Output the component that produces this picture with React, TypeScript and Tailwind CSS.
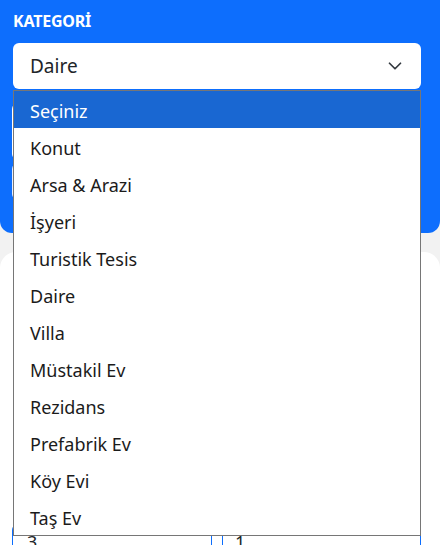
import { ChevronDown } from 'lucide-react';

const options = [
  'Seçiniz',
  'Konut',
  'Arsa & Arazi',
  'İşyeri',
  'Turistik Tesis',
  'Daire',
  'Villa',
  'Müstakil Ev',
  'Rezidans',
  'Prefabrik Ev',
  'Köy Evi',
  'Taş Ev',
];

export default function App() {
  return (
    <div
      className="relative h-[545px] w-full overflow-hidden bg-[#f2f2f2]"
      style={{ fontFamily: '"Noto Sans", "Open Sans", sans-serif' }}
    >
      {/* blue filter panel */}
      <div className="h-[233px] rounded-b-xl bg-[#0d6efd] pl-[13px] pr-[19px] pt-[10px]">
        <div className="text-[16px] font-bold leading-[22px] tracking-[-0.2px] text-white">KATEGORİ</div>
        <div className="mt-[11px] flex h-[46px] items-center justify-between rounded-md bg-white pl-[17px] pr-[15px]">
          <span className="pt-[1px] text-[19px] text-[#212529]">Daire</span>
          <ChevronDown className="h-[22px] w-[22px] text-[#343a40]" strokeWidth={1.9} />
        </div>
        <div className="-ml-px mt-[14px] h-[57px] rounded-md bg-white" />
        <div className="-ml-px mt-[3px] h-[37px] rounded-md bg-[#e8eefc]" />
      </div>

      {/* white card below */}
      <div className="mt-[19px] h-[400px] rounded-t-2xl bg-white px-3 pt-[272px]">
        <div className="flex gap-[10px]">
          <div className="h-[44px] w-[200px] rounded-md border border-[#0d6efd] px-[14px] pt-[4px] text-[18px] text-[#212529]">3</div>
          <div className="h-[44px] w-[199px] rounded-md border border-[#0d6efd] px-[12px] pt-[4px] text-[18px] text-[#212529]">1</div>
        </div>
      </div>

      {/* native select popup */}
      <div className="absolute left-[13px] top-[90px] w-[408px] border border-[#767676] bg-white">
        {options.map((opt, i) => (
          <div
            key={opt}
            className={`flex h-[37px] items-center pl-[16px] pt-[3px] text-[18px] ${
              i === 0 ? 'bg-[#1967d2] text-white' : 'text-[#1b1b1b]'
            }`}
          >
            {opt}
          </div>
        ))}
      </div>
    </div>
  );
}
